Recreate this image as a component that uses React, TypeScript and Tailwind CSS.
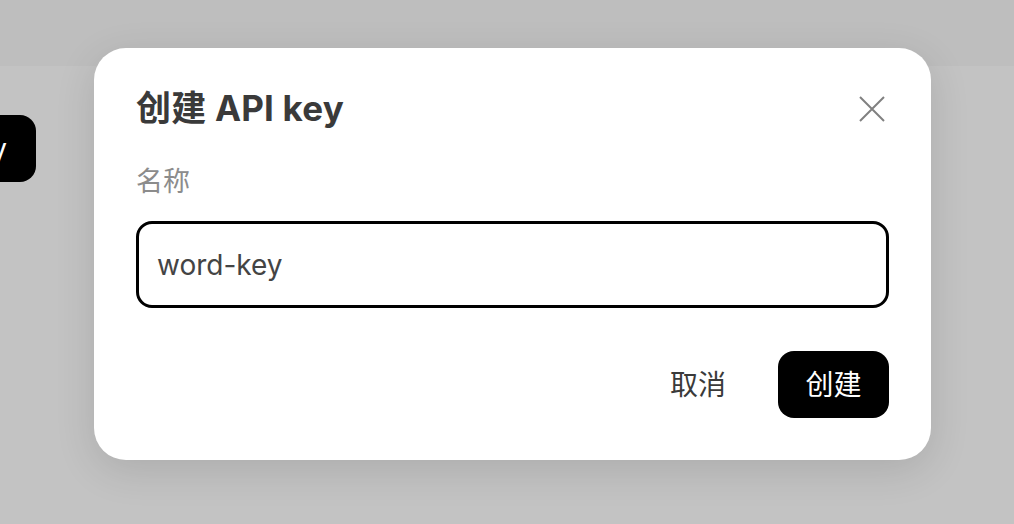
import React from "react";

export default function App() {
  const font = { fontFamily: "Inter, 'Noto Sans CJK SC', 'Noto Sans', sans-serif" };
  return (
    <div className="relative w-[1014px] h-[524px] overflow-hidden bg-[#c3c3c3]" style={font}>
      <div className="h-[66px] bg-[#bebebe]" />
      <div className="flex mt-[49px]">
        <div className="ml-[-264px] h-[67px] w-[300px] shrink-0 rounded-[16px] bg-black text-white text-[28px] whitespace-nowrap flex items-center justify-end pr-[29px]">
          Create API key
        </div>
      </div>

      <div className="absolute left-[94px] top-[48px] w-[837px] h-[412px] rounded-[32px] bg-white shadow-[0_10px_40px_rgba(0,0,0,0.12)] px-[42px] pt-[38px]">
        <div className="flex items-start justify-between">
          <h2 className="text-[35px] leading-[44px] font-bold text-[#3a3a3a] tracking-[0.2px]">创建 API key</h2>
          <button className="mt-[10px] mr-[4px] text-[#808080]">
            <svg width="26" height="26" viewBox="0 0 26 26" fill="none" stroke="currentColor" strokeWidth="2">
              <path d="M1 1L25 25M25 1L1 25" />
            </svg>
          </button>
        </div>
        <div className="mt-[34px] text-[27px] leading-[36px] text-[#8c8c8c]">名称</div>
        <div className="mt-[21px] h-[87px] rounded-[16px] border-[3px] border-black flex items-center px-[18px]">
          <span className="text-[28px] text-[#444444]">word-key</span>
        </div>
        <div className="mt-[43px] flex items-center justify-end gap-[52px]">
          <button className="text-[28px] text-[#3a3a3a]">取消</button>
          <button className="h-[67px] w-[111px] rounded-[16px] bg-black text-white text-[28px]">创建</button>
        </div>
      </div>
    </div>
  );
}
